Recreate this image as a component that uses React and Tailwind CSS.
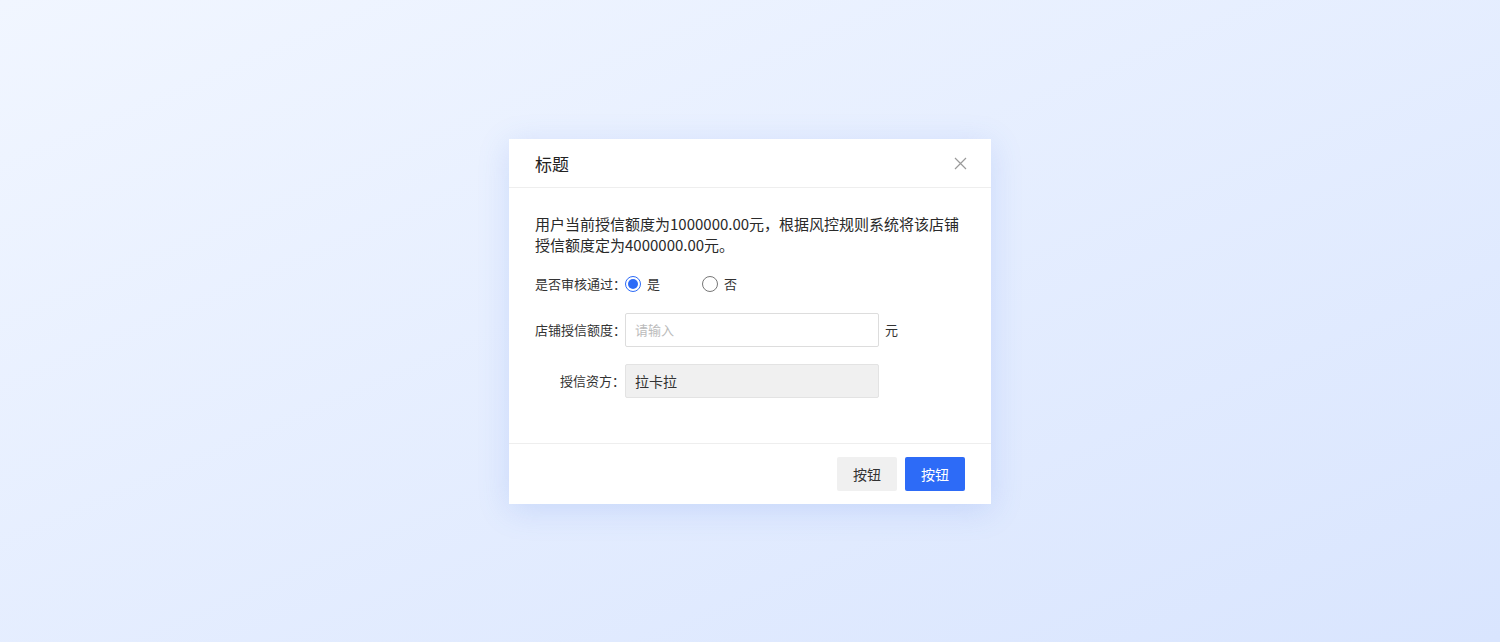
import React from "react";

export default function App() {
  return (
    <div
      className="w-[1500px] h-[642px] bg-linear-to-br from-[#f1f6ff] to-[#d9e5fe] flex items-start justify-center pt-[139px]"
      style={{ fontFamily: '"Noto Sans CJK SC", "Noto Sans", sans-serif' }}
    >
      <div className="w-[482px] h-[365px] bg-white shadow-[0_6px_30px_rgba(80,120,230,0.18)] flex flex-col">
        <div className="h-[49px] shrink-0 border-b border-[#eeeeee] flex items-center justify-between pl-[26px] pr-[24px]">
          <span className="text-[17px] text-[#222] leading-none">标题</span>
          <svg width="13" height="13" viewBox="0 0 13 13">
            <path d="M1 1L12 12M12 1L1 12" stroke="#9a9a9a" strokeWidth="1.2" fill="none" />
          </svg>
        </div>
        <div className="flex-1 px-[26px] pt-[25px]">
          <p className="text-[15px] leading-[21px] text-[#2a2a2a]">
            用户当前授信额度为1000000.00元，根据风控规则系统将该店铺授信额度定为4000000.00元。
          </p>
          <div className="mt-[19px] flex items-center h-[20px] text-[13px] text-[#333]">
            <span className="w-[90px] shrink-0 whitespace-nowrap">是否审核通过：</span>
            <span className="w-[16px] h-[16px] shrink-0 rounded-full border border-[#2d6bf7] flex items-center justify-center">
              <span className="w-[10px] h-[10px] rounded-full bg-[#2d6bf7]"></span>
            </span>
            <span className="ml-[6px]">是</span>
            <span className="ml-[42px] w-[16px] h-[16px] shrink-0 rounded-full border border-[#777]"></span>
            <span className="ml-[6px]">否</span>
          </div>
          <div className="mt-[19px] flex items-center text-[13px] text-[#333]">
            <span className="w-[90px] shrink-0 whitespace-nowrap text-right">店铺授信额度：</span>
            <div className="w-[254px] h-[34px] shrink-0 border border-[#dddddd] rounded-[2px] flex items-center px-[9px] text-[#bbbbbb]">
              请输入
            </div>
            <span className="ml-[6px]">元</span>
          </div>
          <div className="mt-[17px] flex items-center text-[13px] text-[#333]">
            <span className="w-[90px] shrink-0 whitespace-nowrap text-right">授信资方：</span>
            <div className="w-[254px] h-[34px] shrink-0 border border-[#e3e3e3] bg-[#f0f0f0] rounded-[2px] flex items-center px-[9px] text-[14px] text-[#333]">
              拉卡拉
            </div>
          </div>
        </div>
        <div className="h-[61px] shrink-0 border-t border-[#eeeeee] flex items-center justify-end gap-[8px] pr-[26px]">
          <button className="w-[60px] h-[34px] rounded-[2px] bg-[#f0f0f0] text-[14px] text-[#333]">按钮</button>
          <button className="w-[60px] h-[34px] rounded-[2px] bg-[#2d6bf7] text-[14px] text-white">按钮</button>
        </div>
      </div>
    </div>
  );
}
